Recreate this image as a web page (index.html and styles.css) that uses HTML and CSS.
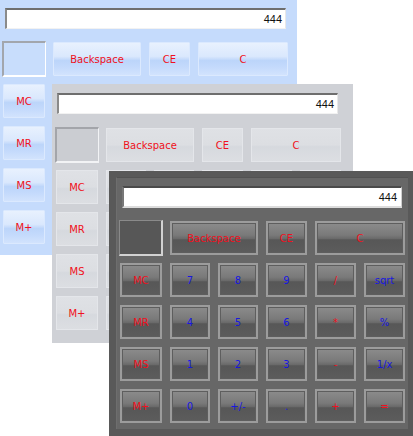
FILE: index.html
```html
<!DOCTYPE html>
<html>
<head>
<meta charset="utf-8">
<link rel="stylesheet" href="styles.css">
</head>
<body>
<div class="desk">

  <div class="win win-blue">
    <div class="display">444</div>
    <div class="keys">
      <div class="mem"></div>
      <button class="key red span2">Backspace</button>
      <button class="key red">CE</button>
      <button class="key red span2">C</button>
      <button class="key red">MC</button>
      <button class="key"></button><button class="key"></button><button class="key"></button><button class="key"></button><button class="key"></button>
      <button class="key red">MR</button>
      <button class="key"></button><button class="key"></button><button class="key"></button><button class="key"></button><button class="key"></button>
      <button class="key red">MS</button>
      <button class="key"></button><button class="key"></button><button class="key"></button><button class="key"></button><button class="key"></button>
      <button class="key red">M+</button>
      <button class="key"></button><button class="key"></button><button class="key"></button><button class="key"></button><button class="key"></button>
    </div>
  </div>

  <div class="win win-gray">
    <div class="display">444</div>
    <div class="keys">
      <div class="mem"></div>
      <button class="key red span2">Backspace</button>
      <button class="key red">CE</button>
      <button class="key red span2">C</button>
      <button class="key red">MC</button>
      <button class="key"></button><button class="key"></button><button class="key"></button><button class="key"></button><button class="key"></button>
      <button class="key red">MR</button>
      <button class="key"></button><button class="key"></button><button class="key"></button><button class="key"></button><button class="key"></button>
      <button class="key red">MS</button>
      <button class="key"></button><button class="key"></button><button class="key"></button><button class="key"></button><button class="key"></button>
      <button class="key red">M+</button>
      <button class="key"></button><button class="key"></button><button class="key"></button><button class="key"></button><button class="key"></button>
    </div>
  </div>

  <div class="win win-dark">
    <div class="inner">
      <div class="display">444</div>
      <div class="keys">
        <div class="mem"></div>
        <button class="key red span2">Backspace</button>
        <button class="key red">CE</button>
        <button class="key red span2">C</button>
        <button class="key red">MC</button>
        <button class="key blue">7</button><button class="key blue">8</button><button class="key blue">9</button><button class="key red">/</button><button class="key blue">sqrt</button>
        <button class="key red">MR</button>
        <button class="key blue">4</button><button class="key blue">5</button><button class="key blue">6</button><button class="key red">*</button><button class="key blue">%</button>
        <button class="key red">MS</button>
        <button class="key blue">1</button><button class="key blue">2</button><button class="key blue">3</button><button class="key red">-</button><button class="key blue">1/x</button>
        <button class="key red">M+</button>
        <button class="key blue">0</button><button class="key blue">+/-</button><button class="key blue">.</button><button class="key red">+</button><button class="key red">=</button>
      </div>
    </div>
  </div>

</div>
</body>
</html>
```

FILE: styles.css
```css
* { box-sizing: border-box; }

html, body {
  margin: 0;
  padding: 0;
  background: #ffffff;
  overflow: hidden;
}

.desk {
  position: relative;
  width: 413px;
  height: 436px;
  overflow: hidden;
}

.win {
  position: absolute;
}

.display {
  height: 21px;
  width: 281px;
  background: #ffffff;
  border-top: 2px solid #6e6e6e;
  border-left: 2px solid #8a8a8a;
  border-right: 1px solid #e8e8e8;
  border-bottom: 1px solid #f2f2f2;
  font-family: "Liberation Sans", Arial, sans-serif;
  font-size: 11px;
  line-height: 18px;
  color: #111111;
  text-align: right;
  padding-right: 3px;
}

.keys {
  display: grid;
  grid-template-columns: 42px 40px 40px 41px 41px 41px;
  grid-auto-rows: 34px;
  column-gap: 8px;
  row-gap: 8px;
  margin-left: -2px;
}

.span2 { grid-column: span 2; }

.key {
  margin: 0;
  padding: 0;
  font-family: "DejaVu Sans", Verdana, sans-serif;
  font-size: 10px;
  cursor: default;
}

.red { color: #f01020; }
.blue { color: #1818e0; }

.mem {
  margin: -1px;
}

/* ---------- blue window ---------- */
.win-blue {
  left: 0;
  top: 0;
  width: 297px;
  height: 255px;
  background: #c5dbfc;
  padding: 8px 0 0 5px;
}

.win-blue .keys { margin-top: 13px; }

.win-blue .key {
  border: 1px solid #dbe9fe;
  border-radius: 1px;
  background: linear-gradient(#e8f1fe 0%, #dae8fd 42%, #bcd5fa 55%, #c4dafc 75%, #d2e3fd 100%);
}

.win-blue .mem {
  background: #c8ddfc;
  border-top: 2px solid #a2a6ad;
  border-left: 2px solid #a2a6ad;
  border-right: 1px solid #ffffff;
  border-bottom: 2px solid #ffffff;
}

/* ---------- gray window ---------- */
.win-gray {
  left: 52px;
  top: 84px;
  width: 301px;
  height: 259px;
  background: #cfd1d6;
  padding: 9px 0 0 5px;
}

.win-gray .keys {
  margin-top: 14px;
  margin-left: -1px;
}

.win-gray .key {
  border: 1px solid #e4e6ea;
  background: linear-gradient(#dfe1e5 0%, #dcdee2 50%, #d6d9de 55%, #dcdee2 100%);
}

.win-gray .mem {
  background: #cbcdd2;
  border-top: 2px solid #a3a5aa;
  border-left: 2px solid #a3a5aa;
  border-right: 1px solid #f2f3f5;
  border-bottom: 2px solid #f2f3f5;
}

/* ---------- dark window ---------- */
.win-dark {
  left: 109px;
  top: 171px;
  width: 306px;
  height: 266px;
  background: #595959;
  padding: 6px 7px 8px 7px;
}

.win-dark .inner {
  height: 100%;
  background: #676767;
  border-top: 1px solid #525252;
  border-left: 1px solid #6e6e6e;
  padding: 8px 0 0 5px;
}

.win-dark .display {
  width: 280px;
  height: 22px;
  border-top: 2px solid #4a4a4a;
  border-left: 2px solid #777777;
  border-bottom: 2px solid #dcdcdc;
  border-right: 1px solid #cfcfcf;
  line-height: 18px;
  padding-right: 4px;
}

.win-dark .keys { margin-top: 13px; }

.win-dark .key {
  border: 2px solid #9c9c9c;
  box-shadow: inset 0 0 0 1px #5e5e5e;
  background: linear-gradient(#8c8c8c 0%, #7a7a7a 40%, #6a6a6a 52%, #575757 56%, #5c5c5c 100%);
}

.win-dark .mem {
  background: #575757;
  border-top: 1px solid #8a8a8a;
  border-left: 1px solid #8a8a8a;
  border-right: 2px solid #d2d2d2;
  border-bottom: 2px solid #d2d2d2;
}
```
